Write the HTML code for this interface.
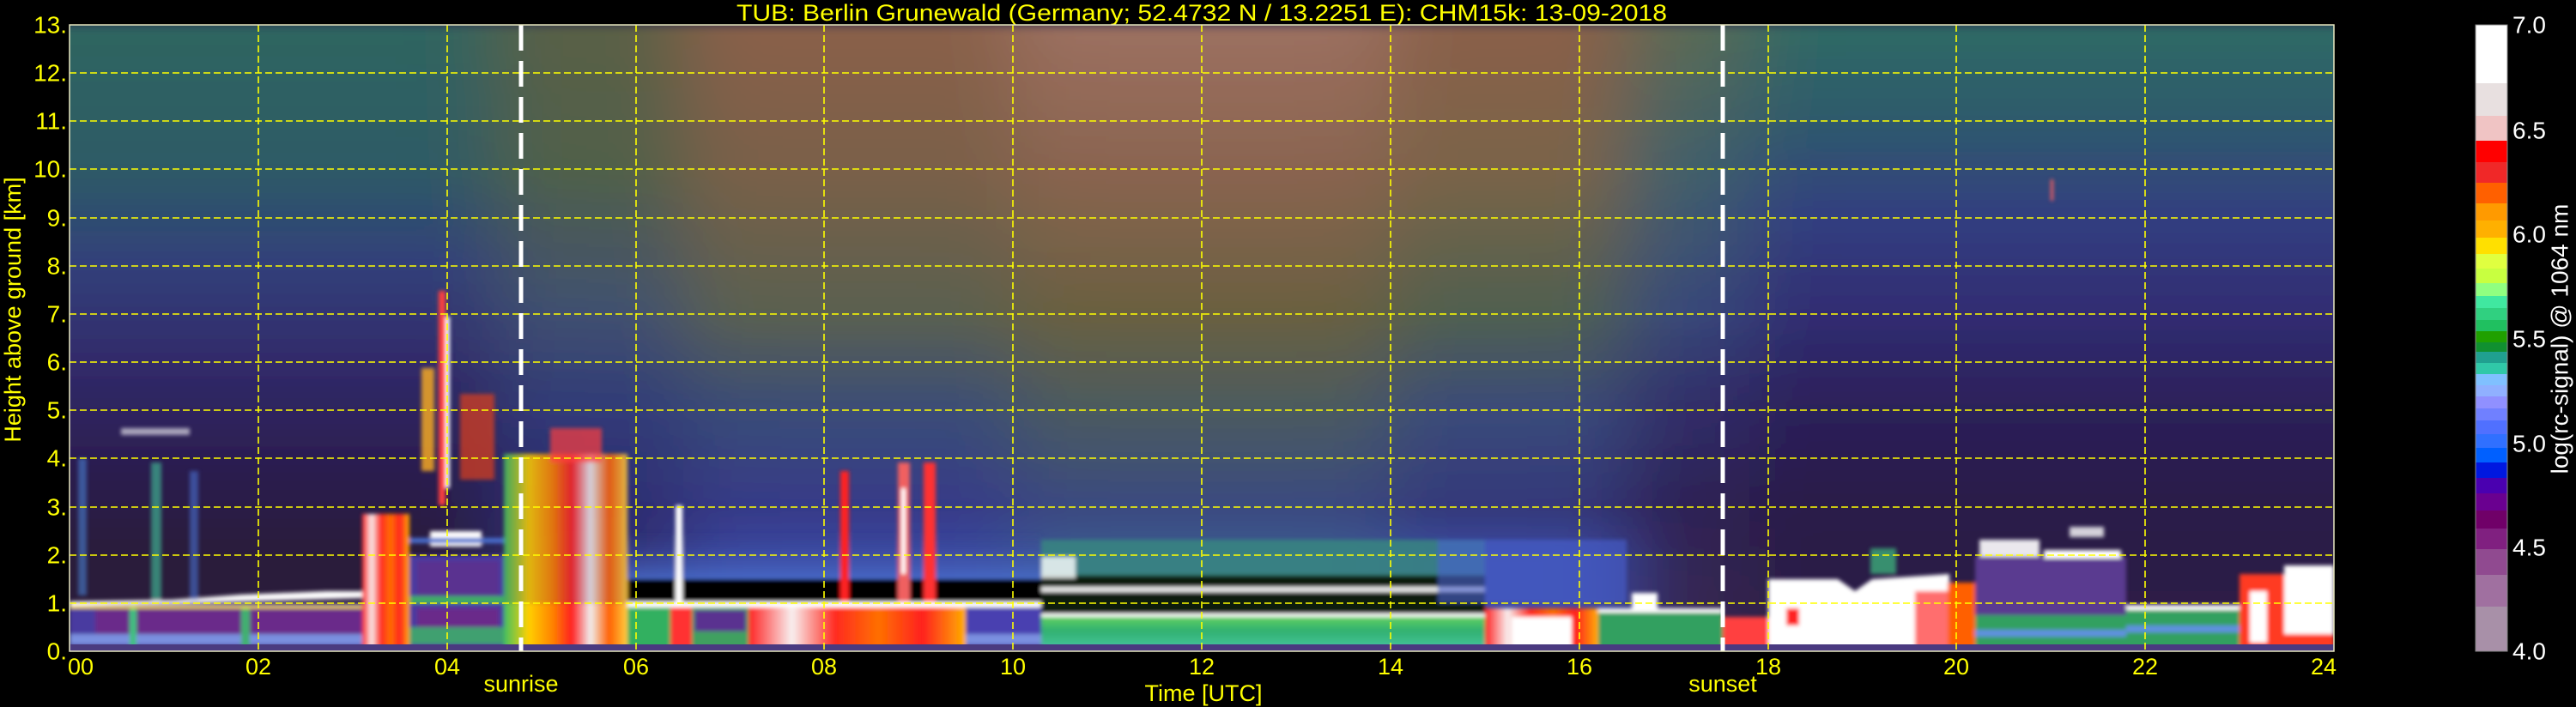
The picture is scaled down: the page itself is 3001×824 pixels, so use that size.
<!DOCTYPE html>
<html><head><meta charset="utf-8"><style>
html,body{margin:0;padding:0;background:#000;width:3001px;height:824px;overflow:hidden}
svg{display:block}
text{font-family:"Liberation Sans","DejaVu Sans",sans-serif}
</style></head><body>
<svg width="3001" height="824" viewBox="0 0 3001 824" xmlns="http://www.w3.org/2000/svg">
<defs>
<clipPath id="pc"><rect x="0" y="0" width="2638" height="730"/></clipPath>
<filter id="hb" x="-10%" y="-10%" width="120%" height="120%"><feGaussianBlur stdDeviation="45 6"/></filter>
<filter id="sb"><feGaussianBlur stdDeviation="2.5"/></filter>
<linearGradient id="g1" x1="0" y1="0" x2="0" y2="1">
<stop offset="0" stop-color="#2f6660"/><stop offset=".23" stop-color="#2e5a66"/><stop offset=".38" stop-color="#30407a"/><stop offset=".54" stop-color="#302a6a"/><stop offset=".69" stop-color="#2c1e52"/><stop offset=".85" stop-color="#2a1a3a"/><stop offset="1" stop-color="#2a1a3a"/></linearGradient>
<linearGradient id="g2" x1="0" y1="0" x2="0" y2="1">
<stop offset="0" stop-color="#5a6045"/><stop offset=".23" stop-color="#50604a"/><stop offset=".46" stop-color="#405070"/><stop offset=".62" stop-color="#303a78"/><stop offset=".77" stop-color="#2e2c70"/><stop offset="1" stop-color="#303070"/></linearGradient>
<linearGradient id="g3" x1="0" y1="0" x2="0" y2="1">
<stop offset="0" stop-color="#8a6048"/><stop offset=".23" stop-color="#7a6048"/><stop offset=".46" stop-color="#5a6050"/><stop offset=".62" stop-color="#3a4c78"/><stop offset=".77" stop-color="#363a88"/><stop offset=".85" stop-color="#3a48a0"/><stop offset="1" stop-color="#3a48a0"/></linearGradient>
<linearGradient id="g4" x1="0" y1="0" x2="0" y2="1">
<stop offset="0" stop-color="#9c7060"/><stop offset=".23" stop-color="#8a6450"/><stop offset=".46" stop-color="#6a6040"/><stop offset=".62" stop-color="#4a5a60"/><stop offset=".77" stop-color="#3a4a80"/><stop offset=".85" stop-color="#3a5a90"/><stop offset="1" stop-color="#3a5a90"/></linearGradient>
<linearGradient id="g5" x1="0" y1="0" x2="0" y2="1">
<stop offset="0" stop-color="#8a6048"/><stop offset=".23" stop-color="#7a6448"/><stop offset=".46" stop-color="#506050"/><stop offset=".62" stop-color="#3a4a7a"/><stop offset=".77" stop-color="#34387a"/><stop offset=".85" stop-color="#3a4aa0"/><stop offset="1" stop-color="#3a4aa0"/></linearGradient>
<linearGradient id="g6" x1="0" y1="0" x2="0" y2="1">
<stop offset="0" stop-color="#5a6a55"/><stop offset=".23" stop-color="#40606a"/><stop offset=".46" stop-color="#38487a"/><stop offset=".62" stop-color="#302c68"/><stop offset=".77" stop-color="#2e2254"/><stop offset="1" stop-color="#3a2a50"/></linearGradient>
<linearGradient id="g7" x1="0" y1="0" x2="0" y2="1">
<stop offset="0" stop-color="#2f6a64"/><stop offset=".15" stop-color="#2e5a6c"/><stop offset=".31" stop-color="#323e80"/><stop offset=".46" stop-color="#302c72"/><stop offset=".62" stop-color="#2c2058"/><stop offset=".77" stop-color="#2a1a48"/><stop offset="1" stop-color="#2e1c44"/></linearGradient>
<linearGradient id="hot" x1="0" y1="0" x2="1" y2="0">
<stop offset="0" stop-color="#ff2020"/><stop offset=".2" stop-color="#f8f0f0"/><stop offset=".4" stop-color="#ff2a20"/><stop offset=".6" stop-color="#ff7000"/><stop offset=".8" stop-color="#ff2020"/><stop offset="1" stop-color="#ffb000"/></linearGradient>
<linearGradient id="mix" x1="0" y1="0" x2="1" y2="0">
<stop offset="0" stop-color="#40c060"/><stop offset=".2" stop-color="#ffd000"/><stop offset=".4" stop-color="#ff8000"/><stop offset=".55" stop-color="#ff2020"/><stop offset=".7" stop-color="#f0f0f0"/><stop offset=".85" stop-color="#ff6000"/><stop offset="1" stop-color="#ffd040"/></linearGradient>
<linearGradient id="grn" x1="0" y1="0" x2="0" y2="1">
<stop offset="0" stop-color="#60d060"/><stop offset=".4" stop-color="#30b070"/><stop offset=".8" stop-color="#40c090"/><stop offset="1" stop-color="#6090e0"/></linearGradient>
<linearGradient id="blu" x1="0" y1="0" x2="0" y2="1">
<stop offset="0" stop-color="#3a4090" stop-opacity="0"/><stop offset="1" stop-color="#4a70d0"/></linearGradient>
</defs>

<rect width="3001" height="824" fill="#000"/>

<!-- title -->
<text x="858" y="24" font-size="27" fill="#ffff00" textLength="1084" lengthAdjust="spacingAndGlyphs">TUB: Berlin Grunewald (Germany; 52.4732 N / 13.2251 E):    CHM15k: 13-09-2018</text>

<g transform="translate(81,29)">
<g clip-path="url(#pc)">
<rect width="2638" height="730" fill="#2a2a50"/>
<g filter="url(#hb)">
<rect x="-150" y="0" width="645" height="730" fill="url(#g1)"/>
<rect x="495" y="0" width="220" height="730" fill="url(#g2)"/>
<rect x="715" y="0" width="384" height="730" fill="url(#g3)"/>
<rect x="1099" y="0" width="440" height="730" fill="url(#g4)"/>
<rect x="1539" y="0" width="275" height="730" fill="url(#g5)"/>
<rect x="1814" y="0" width="143" height="730" fill="url(#g6)"/>
<rect x="1957" y="0" width="850" height="730" fill="url(#g7)"/>
</g>
<g filter="url(#sb)">
<!-- left boundary layer -->
<rect x="0" y="674" width="341" height="56" fill="#4a3aa0"/>
<rect x="30" y="680" width="311" height="30" fill="#6a2a8a"/>
<rect x="0" y="710" width="341" height="12" fill="#7a90e0"/>
<rect x="70" y="676" width="8" height="50" fill="#40c080"/>
<rect x="200" y="676" width="10" height="50" fill="#40b070"/>
<polygon points="0,672 120,670 200,664 300,660 341,660 341,668 200,672 0,677" fill="#fff"/>
<rect x="0" y="677" width="341" height="3" fill="#ffe040"/>
<!-- streaks above at left -->
<rect x="10" y="505" width="10" height="160" fill="#4a80d0" opacity=".6"/>
<rect x="95" y="510" width="12" height="160" fill="#40b090" opacity=".7"/>
<rect x="140" y="520" width="10" height="150" fill="#4a70d0" opacity=".6"/>
<rect x="60" y="470" width="80" height="8" fill="#ffffff" opacity=".6"/>
<!-- 3.1-3.6h -->
<rect x="341" y="570" width="55" height="160" fill="url(#hot)"/>
<!-- 3.6-4.6h -->
<rect x="396" y="618" width="110" height="112" fill="#4a3aa0"/>
<rect x="405" y="680" width="95" height="22" fill="#6a2a8a"/>
<rect x="405" y="625" width="95" height="40" fill="#5a3090"/>
<rect x="396" y="702" width="110" height="20" fill="#40a070"/>
<rect x="396" y="666" width="110" height="8" fill="#40b060"/>
<rect x="420" y="590" width="60" height="18" fill="#fff"/>
<rect x="396" y="598" width="110" height="6" fill="#4a70d0"/>
<!-- spikes near 4h -->
<rect x="430" y="310" width="8" height="250" fill="#ff4040"/>
<rect x="438" y="340" width="5" height="200" fill="#ffffff"/>
<rect x="410" y="400" width="15" height="120" fill="#ffb020" opacity=".8"/>
<rect x="455" y="430" width="40" height="100" fill="#e04020" opacity=".7"/>
<!-- 4.6-5.9h -->
<rect x="506" y="674" width="144" height="56" fill="url(#mix)"/>
<rect x="506" y="500" width="144" height="174" fill="url(#mix)" opacity=".85"/>
<rect x="560" y="470" width="60" height="40" fill="#ff4040" opacity=".7"/>
<!-- middle black band and white line -->
<rect x="650" y="646" width="482" height="28" fill="#000"/>
<rect x="650" y="672" width="482" height="7" fill="#fff"/>
<rect x="650" y="590" width="482" height="56" fill="url(#blu)" opacity=".8"/>
<!-- 5.9-6.6 -->
<rect x="650" y="679" width="75" height="51" fill="#30b060"/>
<rect x="700" y="679" width="25" height="51" fill="#ff3030"/>
<rect x="706" y="560" width="8" height="115" fill="#fff"/>
<!-- 6.6-7.2 -->
<rect x="725" y="679" width="66" height="51" fill="#40a060"/>
<rect x="728" y="682" width="60" height="25" fill="#5a3090"/>
<!-- 7.2-9.5 -->
<rect x="791" y="679" width="253" height="51" fill="url(#hot)"/>
<!-- red spikes -->
<rect x="898" y="520" width="10" height="152" fill="#ff2020"/>
<rect x="965" y="510" width="14" height="162" fill="#f06060"/>
<rect x="995" y="510" width="14" height="162" fill="#ff3030"/>
<rect x="969" y="540" width="5" height="100" fill="#fff"/>
<!-- 9.5-10.3 -->
<rect x="1044" y="679" width="88" height="51" fill="#4a40b0"/>
<rect x="1044" y="710" width="88" height="12" fill="#7a90e0"/>
<!-- 10.3-15 -->
<rect x="1132" y="690" width="517" height="40" fill="url(#grn)"/>
<rect x="1132" y="640" width="517" height="50" fill="#0a1a10"/>
<rect x="1132" y="686" width="517" height="4" fill="#fff"/>
<rect x="1132" y="655" width="517" height="6" fill="#fff" opacity=".9"/>
<rect x="1132" y="600" width="517" height="42" fill="#3a8a80" opacity=".8"/>
<rect x="1132" y="620" width="40" height="25" fill="#fff" opacity=".8"/>
<!-- 14.5-16.5 blue streaks -->
<rect x="1594" y="600" width="220" height="74" fill="#4a60d0" opacity=".6"/>
<!-- 15-16.2 -->
<rect x="1649" y="680" width="132" height="50" fill="url(#hot)"/>
<rect x="1680" y="690" width="70" height="40" fill="#fff"/>
<!-- 16.2-17.5 -->
<rect x="1781" y="684" width="145" height="46" fill="#30a060"/>
<rect x="1781" y="680" width="145" height="5" fill="#fff"/>
<rect x="1820" y="662" width="30" height="18" fill="#fff"/>
<!-- 17.5-18 -->
<rect x="1926" y="690" width="53" height="40" fill="#ff4040"/>
<!-- 18-19.9 -->
<polygon points="1979,646 2060,646 2080,660 2100,646 2190,640 2190,730 1979,730" fill="#fff"/>
<rect x="2000" y="680" width="15" height="20" fill="#ff2020"/>
<rect x="2150" y="660" width="40" height="70" fill="#ff3030" opacity=".7"/>
<rect x="2098" y="610" width="30" height="30" fill="#40c080" opacity=".7"/>
<!-- 19.9-20.2 -->
<rect x="2188" y="650" width="32" height="80" fill="#ff6000"/>
<!-- 20.2-21.8 -->
<rect x="2220" y="620" width="176" height="68" fill="#5a3a90"/>
<rect x="2220" y="688" width="176" height="42" fill="#30a060"/>
<rect x="2220" y="705" width="176" height="8" fill="#6090e0"/>
<rect x="2225" y="600" width="70" height="20" fill="#fff" opacity=".9"/>
<rect x="2300" y="612" width="90" height="10" fill="#fff"/>
<rect x="2330" y="585" width="40" height="12" fill="#fff" opacity=".8"/>
<!-- 21.8-23 -->
<rect x="2396" y="682" width="132" height="48" fill="#30a060"/>
<rect x="2396" y="676" width="132" height="6" fill="#fff"/>
<rect x="2396" y="700" width="132" height="8" fill="#6090e0"/>
<!-- 23-24 -->
<rect x="2528" y="640" width="110" height="90" fill="#ff3a20"/>
<rect x="2580" y="630" width="58" height="80" fill="#fff"/>
<rect x="2540" y="660" width="20" height="60" fill="#fff"/>
<!-- spike 21h -->
<rect x="2308" y="180" width="3" height="25" fill="#ff6060"/>
</g>
<!-- bottom noise strip -->
<rect x="0" y="722" width="2638" height="8" fill="#4a3a80"/>
<!-- grid -->
<g stroke="#ffff00" stroke-width="1.6" stroke-dasharray="8 4" fill="none">
<path d="M0 674H2638M0 618H2638M0 562H2638M0 505H2638M0 449H2638M0 393H2638M0 337H2638M0 281H2638M0 225H2638M0 168H2638M0 112H2638M0 56H2638"/>
<path d="M220 0V730M440 0V730M660 0V730M879 0V730M1099 0V730M1319 0V730M1539 0V730M1759 0V730M1979 0V730M2198 0V730M2418 0V730"/>
</g>
<!-- sunrise/sunset -->
<g stroke="#fff" stroke-width="5" stroke-dasharray="30 12">
<path d="M526 0V730"/><path d="M1926 0V730"/>
</g>
</g>
<rect x="0" y="0" width="2638" height="730" fill="none" stroke="#e8e8c0" stroke-width="1.5"/>
</g>

<!-- y ticks -->
<g font-size="28" fill="#ffff00" text-anchor="end" dominant-baseline="central">
<text x="78" y="759">0.</text><text x="78" y="703">1.</text><text x="78" y="647">2.</text><text x="78" y="591">3.</text><text x="78" y="534">4.</text><text x="78" y="478">5.</text><text x="78" y="422">6.</text><text x="78" y="366">7.</text><text x="78" y="310">8.</text><text x="78" y="254">9.</text><text x="78" y="197">10.</text><text x="78" y="141">11.</text><text x="78" y="85">12.</text><text x="78" y="29">13.</text>
</g>
<!-- x ticks -->
<g font-size="27" fill="#ffff00" text-anchor="middle" dominant-baseline="central">
<text x="94" y="777">00</text><text x="301" y="777">02</text><text x="521" y="777">04</text><text x="741" y="777">06</text><text x="960" y="777">08</text><text x="1180" y="777">10</text><text x="1400" y="777">12</text><text x="1620" y="777">14</text><text x="1840" y="777">16</text><text x="2060" y="777">18</text><text x="2279" y="777">20</text><text x="2499" y="777">22</text><text x="2707" y="777">24</text>
<text x="607" y="797">sunrise</text>
<text x="2007" y="797">sunset</text>
<text x="1402" y="808">Time [UTC]</text>
</g>
<text transform="translate(15,361) rotate(-90)" font-size="27" fill="#ffff00" text-anchor="middle" dominant-baseline="central">Height above ground [km]</text>

<!-- colorbar -->
<g transform="translate(2884,29)">
<rect y="0" width="37" height="69" fill="#ffffff"/>
<rect y="68" width="37" height="38" fill="#e8e0e0"/>
<rect y="106" width="37" height="30" fill="#f0c4c4"/>
<rect y="135" width="37" height="25" fill="#ff0000"/>
<rect y="160" width="37" height="24" fill="#f02828"/>
<rect y="184" width="37" height="24" fill="#ff6000"/>
<rect y="208" width="37" height="21" fill="#ff9a00"/>
<rect y="228" width="37" height="20" fill="#ffb000"/>
<rect y="248" width="37" height="19" fill="#ffe000"/>
<rect y="267" width="37" height="17" fill="#e0ff40"/>
<rect y="284" width="37" height="18" fill="#c8ff40"/>
<rect y="301" width="37" height="16" fill="#90ff80"/>
<rect y="316" width="37" height="14" fill="#40e8a0"/>
<rect y="330" width="37" height="14" fill="#30d080"/>
<rect y="344" width="37" height="14" fill="#20c060"/>
<rect y="357" width="37" height="13" fill="#20a000"/>
<rect y="370" width="37" height="11" fill="#109030"/>
<rect y="381" width="37" height="13" fill="#20a090"/>
<rect y="394" width="37" height="13" fill="#30c8a8"/>
<rect y="407" width="37" height="14" fill="#80c0ff"/>
<rect y="420" width="37" height="14" fill="#90b0ff"/>
<rect y="433" width="37" height="14" fill="#9090ff"/>
<rect y="447" width="37" height="14" fill="#7080ff"/>
<rect y="461" width="37" height="16" fill="#5070ff"/>
<rect y="477" width="37" height="17" fill="#3070ff"/>
<rect y="493" width="37" height="18" fill="#0060ff"/>
<rect y="510" width="37" height="18" fill="#0018e0"/>
<rect y="528" width="37" height="19" fill="#4a00b0"/>
<rect y="546" width="37" height="20" fill="#6a0090"/>
<rect y="566" width="37" height="21" fill="#700068"/>
<rect y="587" width="37" height="24" fill="#802080"/>
<rect y="611" width="37" height="30" fill="#904a90"/>
<rect y="641" width="37" height="37" fill="#a070a0"/>
<rect y="678" width="37" height="52" fill="#a890a8"/>
<rect x="0" y="0" width="37" height="730" fill="none" stroke="#888" stroke-width="1"/>
</g>
<g font-size="28" fill="#ffffff" dominant-baseline="central">
<text x="2927" y="29">7.0</text><text x="2927" y="152">6.5</text><text x="2927" y="273">6.0</text><text x="2927" y="395">5.5</text><text x="2927" y="517">5.0</text><text x="2927" y="638">4.5</text><text x="2927" y="759">4.0</text>
</g>
<text transform="translate(2982,395) rotate(-90)" font-size="28" fill="#ffffff" text-anchor="middle" dominant-baseline="central">log(rc-signal) @ 1064 nm</text>
</svg>
</body></html>
